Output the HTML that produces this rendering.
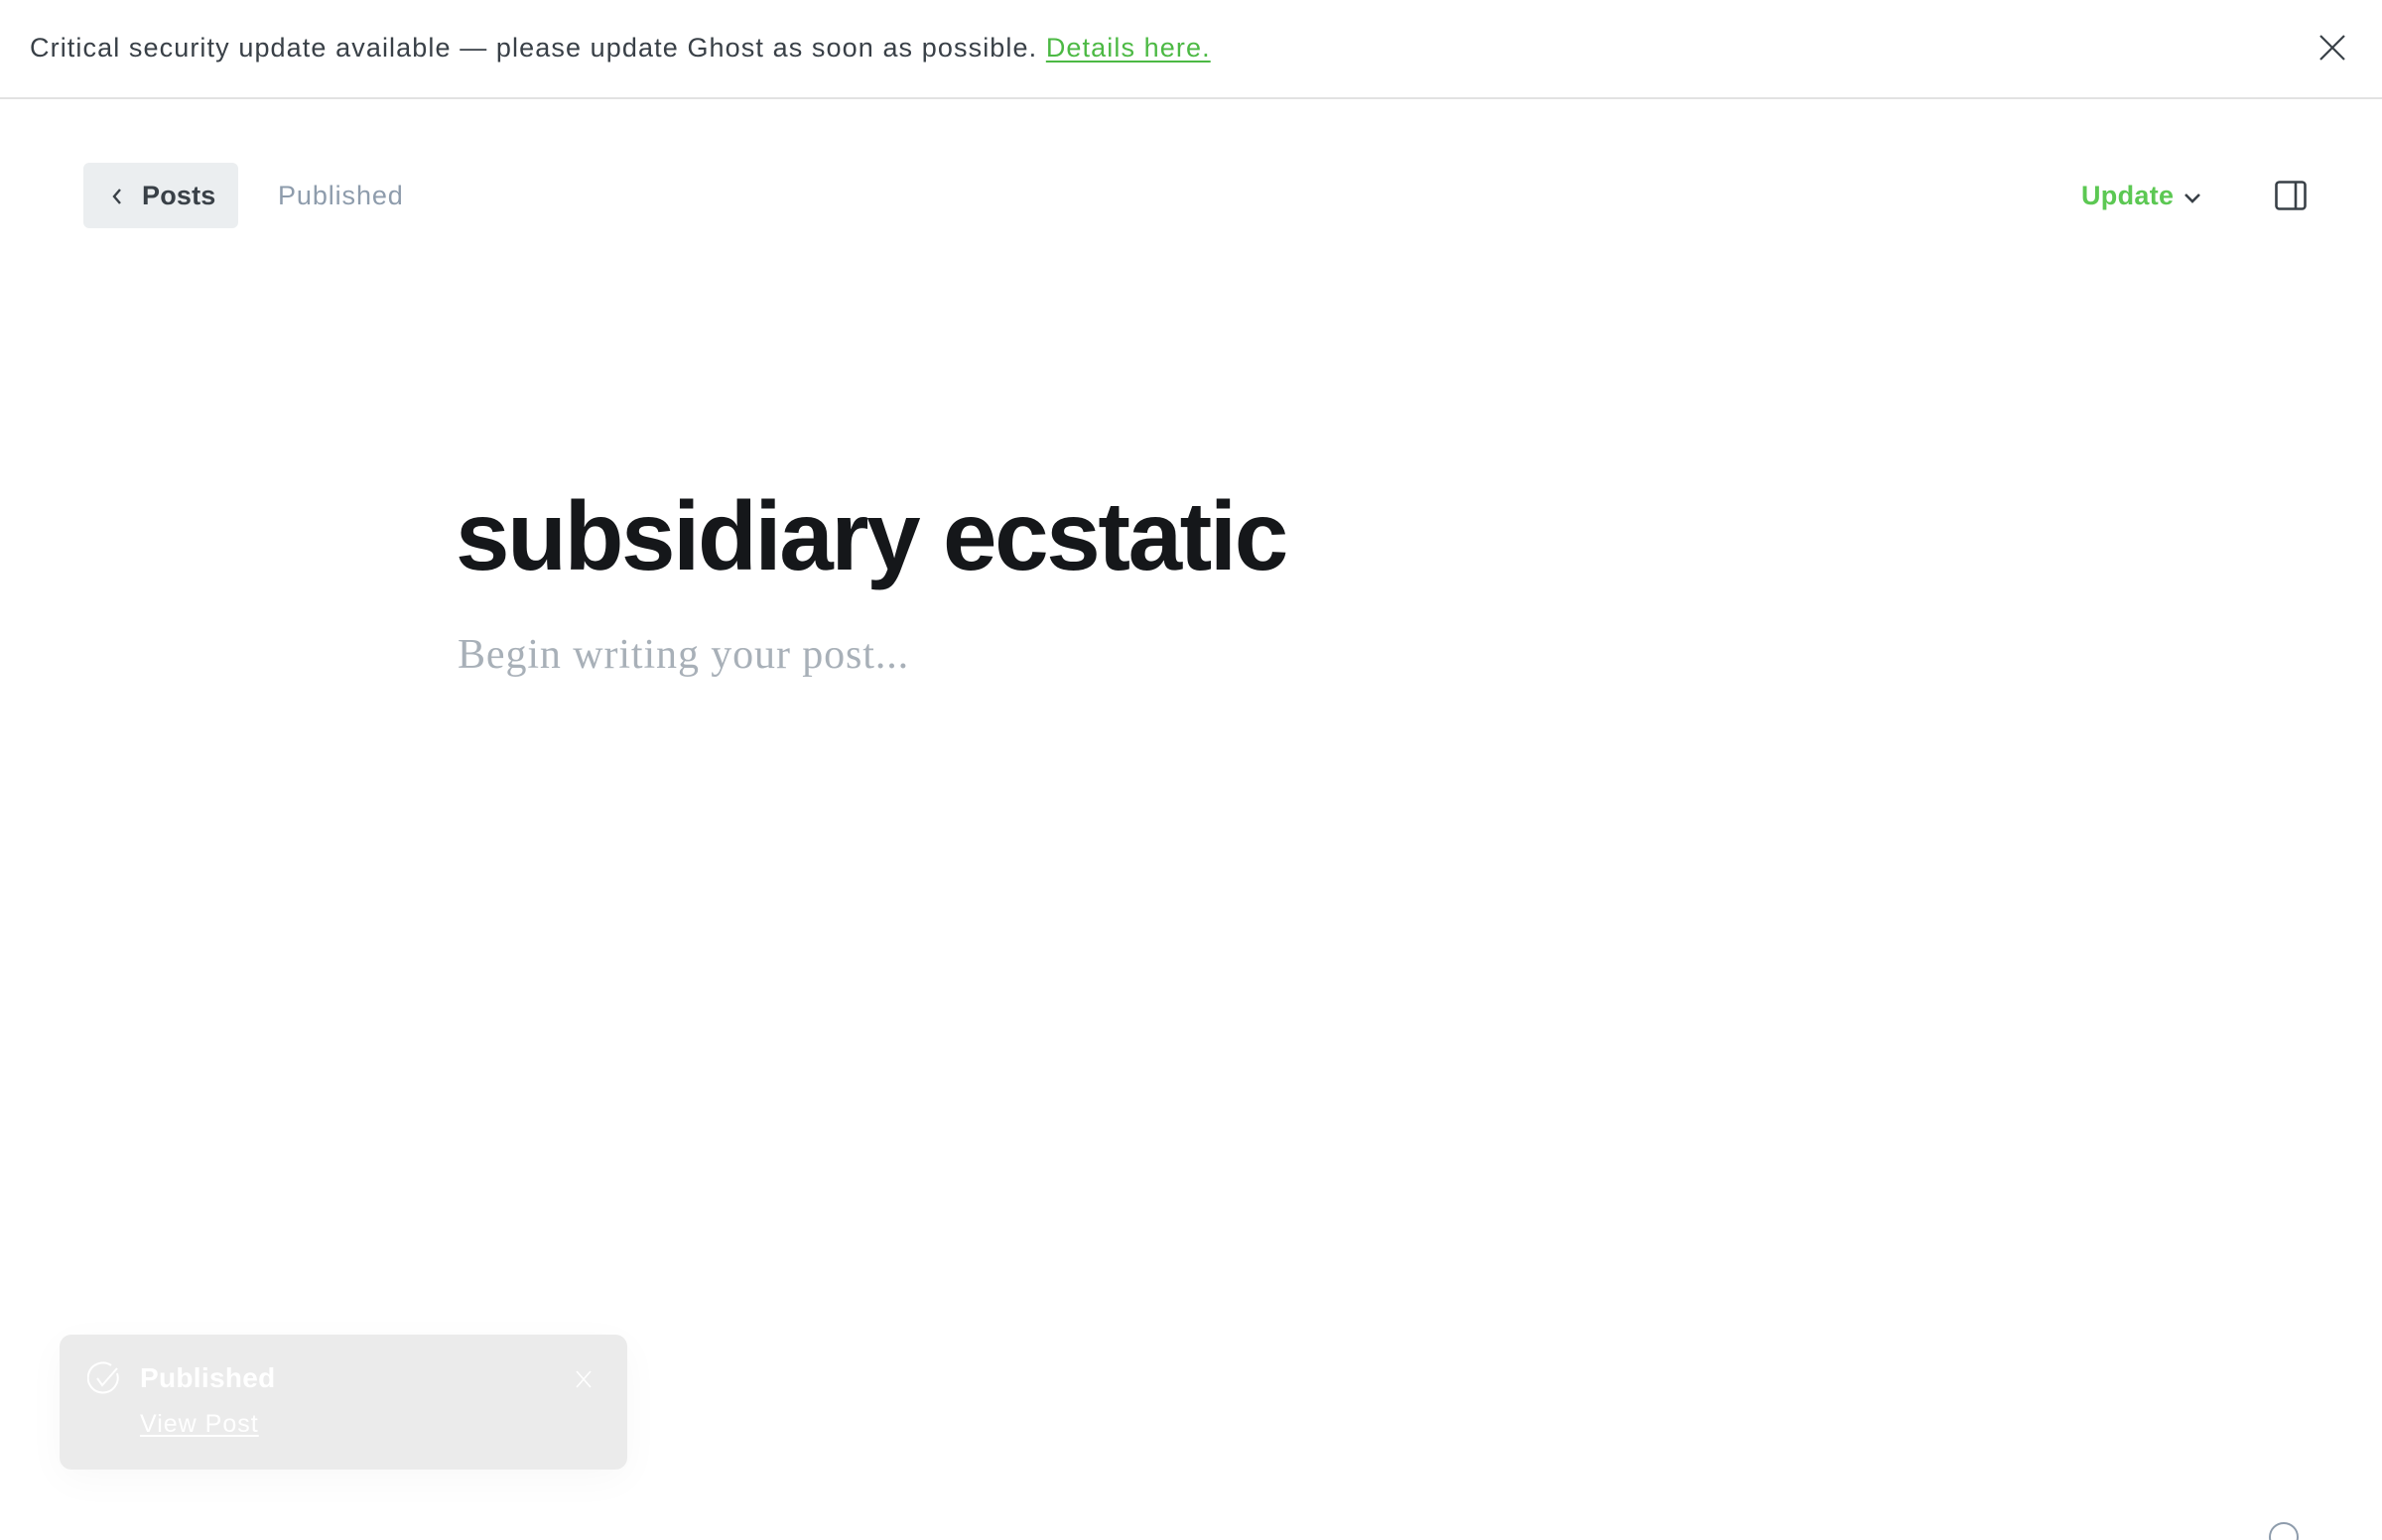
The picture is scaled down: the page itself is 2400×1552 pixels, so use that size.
<!DOCTYPE html>
<html><head><meta charset="utf-8"><style>
*{margin:0;padding:0;box-sizing:border-box}
html,body{width:2400px;height:1542px;overflow:hidden;background:#fff;font-family:"Liberation Sans",sans-serif}
.banner{position:absolute;left:0;top:0;width:2400px;height:100px;border-bottom:2px solid #e2e2e2}
.banner .t{position:absolute;left:30px;top:33px;font-size:27px;color:#394047;white-space:nowrap;letter-spacing:1.1px}
.banner a{color:#4cb944;text-decoration:underline;text-underline-offset:4px}
.btn{position:absolute;left:84px;top:164px;width:156px;height:66px;background:#ebeef0;border-radius:6px}
.btn span{position:absolute;left:59px;top:18px;font-size:27px;font-weight:bold;color:#394047;letter-spacing:0.2px}
.pub{position:absolute;left:280px;top:182px;font-size:27px;color:#8e9cac;letter-spacing:0.9px}
.upd{position:absolute;left:2097px;top:182px;font-size:27px;font-weight:bold;color:#5cc853;letter-spacing:0.3px}
h1{position:absolute;left:459px;top:480px;font-size:98px;font-weight:bold;color:#15171a;letter-spacing:-2.4px;white-space:nowrap;line-height:120px}
.ph{position:absolute;left:461px;top:636px;font-family:"Liberation Serif",serif;font-size:42px;color:#a8b0b8;white-space:nowrap;letter-spacing:0.9px}
.toast{position:absolute;left:60px;top:1345px;width:572px;height:136px;background:#ebebeb;border-radius:12px;box-shadow:0 10px 40px rgba(0,0,0,0.03)}
.toast .h{position:absolute;left:81px;top:28px;font-size:28px;font-weight:bold;color:#fff;letter-spacing:0.3px}
.toast .v{position:absolute;left:81px;top:76px;font-size:25px;color:#fff;text-decoration:underline;text-underline-offset:3px;letter-spacing:1px}
</style></head><body>
<div class="banner"><div class="t">Critical security update available — please update Ghost as soon as possible. <a>Details here.</a></div>
<svg style="position:absolute;left:2337px;top:35px" width="26" height="26" viewBox="0 0 26 26"><path d="M1 1L25 25M25 1L1 25" stroke="#394047" stroke-width="2.2" fill="none"/></svg></div>
<div class="btn"><svg style="position:absolute;left:28px;top:26px" width="12" height="16" viewBox="0 0 12 16"><path d="M9 1L3 8L9 15" stroke="#394047" stroke-width="2.4" fill="none"/></svg><span>Posts</span></div>
<div class="pub">Published</div>
<div class="upd">Update</div>
<svg style="position:absolute;left:2200px;top:194px" width="18" height="12" viewBox="0 0 18 12"><path d="M2 2L9 9L16 2" stroke="#394047" stroke-width="2.6" fill="none"/></svg>
<svg style="position:absolute;left:2292px;top:182px" width="32" height="30" viewBox="0 0 32 30"><rect x="1.5" y="1.5" width="29" height="27" rx="3" stroke="#394047" stroke-width="2.6" fill="none"/><path d="M21 1.5V28.5" stroke="#394047" stroke-width="2.6"/></svg>
<h1>subsidiary ecstatic</h1>
<div class="ph">Begin writing your post...</div>
<div class="toast">
<svg style="position:absolute;left:28px;top:27px" width="34" height="34" viewBox="0 0 34 34"><path d="M30 12A15 15 0 1 1 24 4" stroke="#fff" stroke-width="2" fill="none"/><path d="M10 17L15 24L30 7" stroke="#fff" stroke-width="2" fill="none"/></svg>
<div class="h">Published</div><div class="v">View Post</div>
<svg style="position:absolute;left:520px;top:36px" width="16" height="18" viewBox="0 0 16 18"><path d="M1 1L15 17M15 1L1 17" stroke="#fff" stroke-width="1.6" fill="none"/></svg>
</div>
<svg style="position:absolute;left:2284px;top:1532px" width="34" height="20" viewBox="0 0 34 20"><circle cx="17" cy="17" r="14" stroke="#8e9cac" stroke-width="2" fill="none"/></svg>
</body></html>
